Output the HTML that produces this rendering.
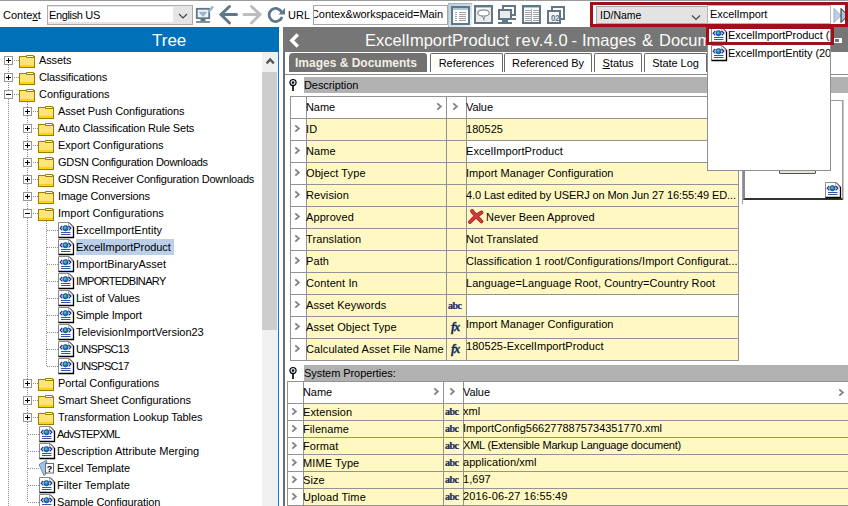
<!DOCTYPE html><html><head><meta charset="utf-8"><style>
*{box-sizing:border-box}
html,body{margin:0;padding:0}
body{width:848px;height:506px;overflow:hidden;position:relative;background:#fff;font-family:"Liberation Sans",sans-serif;font-size:11px;color:#000}
.a{position:absolute}
.t{position:absolute;white-space:nowrap;line-height:13px}
.tr{position:absolute;white-space:nowrap;line-height:13px;letter-spacing:-0.18px}
.tb{position:absolute;white-space:nowrap;line-height:13px;letter-spacing:-0.07px}
svg.i{position:absolute;overflow:visible}
.dv{position:absolute;width:1px;background-image:linear-gradient(#8c8c8c 50%,transparent 50%);background-size:1px 2px}
.dh{position:absolute;height:1px;background-image:linear-gradient(90deg,#8c8c8c 50%,transparent 50%);background-size:2px 1px}
.box{position:absolute;width:9px;height:9px;border:1px solid #979797;background:#fff}
.box:before{content:"";position:absolute;left:1px;top:3px;width:5px;height:1px;background:#000}
.box.p:after{content:"";position:absolute;left:3px;top:1px;width:1px;height:5px;background:#000}
</style></head><body>
<div class="a" style="left:0;top:0;width:848px;height:1px;background:#9a9a9a"></div>
<div class="t" style="left:3px;top:9px">Conte<u>x</u>t</div>
<div class="a" style="left:47px;top:5px;width:146px;height:20px;border:1px solid #adadad;background:#e5e5e5"></div>
<div class="a" style="left:48px;top:7px;width:125px;height:15px;background:#fff"></div>
<div class="t" style="left:49px;top:9px;letter-spacing:-0.35px">English US</div>
<svg class="i" style="left:178px;top:13px" width="10" height="7"><path d="M1 1l4 4l4-4" fill="none" stroke="#444" stroke-width="1.2"/></svg>
<svg class="i" style="left:195px;top:4px" width="20" height="20"><rect x="1.8" y="4.8" width="12.4" height="9.4" fill="#eef2f5" stroke="#5f7889" stroke-width="1.8"/><path d="M5 8.5l3 3.2l3-3.2z" fill="#9ab4c6" stroke="#9ab4c6" stroke-width="1.5" stroke-linejoin="round"/><rect x="5.5" y="14.5" width="5" height="2.5" fill="#5f7889"/><rect x="1" y="17.2" width="14" height="1.6" fill="#5f7889"/><path d="M13.5 8l4.5-5.5" stroke="#9ab8cc" stroke-width="2.6"/></svg>
<svg class="i" style="left:218px;top:4px" width="20" height="21"><path d="M11.5 2.5l-8.5 8l8.5 8.5M4 10.5h14.5" fill="none" stroke="#5f7889" stroke-width="3" stroke-linecap="round"/></svg>
<svg class="i" style="left:242px;top:4px" width="20" height="21"><path d="M9.5 2.5l8.5 8l-8.5 8.5M2 10.5h14.5" fill="none" stroke="#bdbdbd" stroke-width="3" stroke-linecap="round"/></svg>
<svg class="i" style="left:267px;top:5px" width="19" height="19"><path d="M14.6 7A6.6 6.6 0 1 0 14.6 13" fill="none" stroke="#5f7889" stroke-width="2.8" stroke-linecap="round"/><path d="M11.5 9.5h6.5v-6.5z" fill="#5f7889"/></svg>
<div class="t" style="left:288px;top:9px">URL</div>
<div class="a" style="left:313px;top:5px;width:135px;height:20px;border:1px solid #a5a5a5;background:#fff;overflow:hidden"><div class="tb" style="left:-3px;top:2px">Contex&amp;workspaceid=Main</div></div>
<div class="a" style="left:448px;top:3px;width:24px;height:24px;background:linear-gradient(135deg,#bcd0dc 0%,#d3e1e9 60%,#eef4f7 100%);border-top:1px solid #9fb4c2;border-left:1px solid #aec2cf"></div>
<svg class="i" style="left:451px;top:6px" width="19" height="19" shape-rendering="crispEdges"><rect x="0" y="0" width="19" height="19" fill="#5f7889"/><rect x="2" y="2" width="15" height="15" fill="#fff"/><rect x="2" y="2" width="15" height="2" fill="#a9c7d4"/><rect x="4" y="6" width="2" height="1" fill="#a3a3a3"/><rect x="8" y="6" width="7" height="1" fill="#a3a3a3"/><rect x="4" y="8" width="2" height="1" fill="#a3a3a3"/><rect x="8" y="8" width="7" height="1" fill="#a3a3a3"/><rect x="4" y="10" width="2" height="1" fill="#a3a3a3"/><rect x="8" y="10" width="7" height="1" fill="#a3a3a3"/><rect x="4" y="12" width="2" height="1" fill="#a3a3a3"/><rect x="8" y="12" width="7" height="1" fill="#a3a3a3"/><rect x="4" y="14" width="2" height="1" fill="#a3a3a3"/><rect x="8" y="14" width="7" height="1" fill="#a3a3a3"/></svg>
<svg class="i" style="left:474px;top:5px" width="19" height="19" shape-rendering="crispEdges"><rect x="0" y="0" width="19" height="19" fill="#5f7889"/><rect x="2" y="2" width="15" height="15" fill="#fff"/><rect x="2" y="2" width="15" height="1" fill="#a9c7d4"/><rect x="2" y="4" width="15" height="13" fill="#ececec"/></svg>
<svg class="i" style="left:474px;top:5px" width="19" height="19"><ellipse cx="9.5" cy="8" rx="5.8" ry="3.1" fill="#fff" stroke="#8c8c8c" stroke-width="1.2"/><path d="M8.3 10.8l1.6 3.8l0.6-3.6" fill="#fff" stroke="#8c8c8c" stroke-width="1.1"/></svg>
<svg class="i" style="left:497px;top:4px" width="20" height="21" shape-rendering="crispEdges"><rect x="5" y="1" width="14" height="11" fill="#5f7889"/><rect x="7" y="3" width="10" height="7" fill="#fff"/><rect x="14" y="14" width="5" height="2" fill="#5f7889"/><rect x="1" y="5" width="14" height="11" fill="#5f7889"/><rect x="3" y="7" width="10" height="7" fill="#ececec"/><rect x="5" y="16" width="6" height="2" fill="#5f7889"/><rect x="1" y="18" width="14" height="2" fill="#5f7889"/></svg>
<svg class="i" style="left:522px;top:5px" width="19" height="19" shape-rendering="crispEdges"><rect x="0" y="0" width="19" height="19" fill="#5f7889"/><rect x="2" y="2" width="15" height="15" fill="#fff"/><rect x="2" y="2" width="15" height="1" fill="#a9c7d4"/><rect x="3" y="5" width="6" height="1" fill="#a3a3a3"/><rect x="11" y="5" width="6" height="1" fill="#a3a3a3"/><rect x="3" y="7" width="6" height="1" fill="#a3a3a3"/><rect x="11" y="7" width="6" height="1" fill="#a3a3a3"/><rect x="3" y="9" width="6" height="1" fill="#a3a3a3"/><rect x="11" y="9" width="6" height="1" fill="#a3a3a3"/><rect x="3" y="11" width="6" height="1" fill="#a3a3a3"/><rect x="11" y="11" width="6" height="1" fill="#a3a3a3"/><rect x="3" y="13" width="6" height="1" fill="#a3a3a3"/><rect x="11" y="13" width="6" height="1" fill="#a3a3a3"/><rect x="3" y="15" width="6" height="1" fill="#a3a3a3"/><rect x="11" y="15" width="6" height="1" fill="#a3a3a3"/><rect x="9" y="4" width="1" height="13" fill="#b0b0b0"/><rect x="2" y="3" width="15" height="1" fill="#fff"/></svg>
<svg class="i" style="left:547px;top:6px" width="19" height="19" shape-rendering="crispEdges"><rect x="4" y="0" width="14" height="14" fill="#5f7889"/><rect x="6" y="2" width="10" height="10" fill="#fff"/><rect x="0" y="4" width="14" height="14" fill="#5f7889"/><rect x="2" y="6" width="10" height="10" fill="#f6f6f6"/></svg>
<div class="t" style="left:551px;top:13px;font-size:8px;line-height:9px;font-weight:bold;color:#5f7889;letter-spacing:-0.3px;transform:scaleY(1.15);transform-origin:0 0">02</div>
<div class="a" style="left:0;top:27px;width:279px;height:25px;background:#0070b9"></div>
<div class="t" style="left:152px;top:31px;font-size:17px;line-height:19px;color:#fff">Tree</div>
<div class="a" style="left:278px;top:52px;width:1px;height:454px;background:#1a78c2"></div>
<div class="a" style="left:262px;top:52px;width:16px;height:454px;background:#f0f0f0"></div>
<div class="a" style="left:262px;top:72px;width:15px;height:258px;background:#cdcdcd"></div>
<svg class="i" style="left:265px;top:57px" width="10" height="8"><path d="M1.6 6.4l3.6-3.9l3.6 3.9" fill="none" stroke="#555" stroke-width="2.3"/></svg>
<div class="dv" style="left:8px;top:65px;height:441px"></div>
<div class="dv" style="left:27px;top:98px;height:404px"></div>
<div class="dv" style="left:46px;top:219px;height:148px"></div>
<div class="box p" style="left:4px;top:56px"></div>
<div class="dh" style="left:14px;top:60px;width:5px"></div>
<svg class="i" style="left:19px;top:55px" width="16" height="13"><rect x="0.5" y="1.5" width="15" height="11" fill="#ffe47a" stroke="#9c7e00" stroke-width="1"/><path d="M7.5 0.5h7v2h-7z" fill="#fff" stroke="#9c7e00" stroke-width="1"/><rect x="1" y="10" width="14" height="2" fill="#ffd400"/></svg>
<div class="tr" style="left:39px;top:54px;letter-spacing:-0.120px">Assets</div>
<div class="box p" style="left:4px;top:73px"></div>
<div class="dh" style="left:14px;top:77px;width:5px"></div>
<svg class="i" style="left:19px;top:72px" width="16" height="13"><rect x="0.5" y="1.5" width="15" height="11" fill="#ffe47a" stroke="#9c7e00" stroke-width="1"/><path d="M7.5 0.5h7v2h-7z" fill="#fff" stroke="#9c7e00" stroke-width="1"/><rect x="1" y="10" width="14" height="2" fill="#ffd400"/></svg>
<div class="tr" style="left:39px;top:71px;letter-spacing:-0.151px">Classifications</div>
<div class="box m" style="left:4px;top:90px"></div>
<div class="dh" style="left:14px;top:94px;width:5px"></div>
<svg class="i" style="left:19px;top:89px" width="16" height="13"><rect x="0.5" y="1.5" width="15" height="11" fill="#ffe47a" stroke="#9c7e00" stroke-width="1"/><path d="M7.5 0.5h7v2h-7z" fill="#fff" stroke="#9c7e00" stroke-width="1"/><rect x="1" y="10" width="14" height="2" fill="#ffd400"/></svg>
<div class="tr" style="left:39px;top:88px;letter-spacing:-0.026px">Configurations</div>
<div class="box p" style="left:23px;top:107px"></div>
<div class="dh" style="left:33px;top:111px;width:5px"></div>
<svg class="i" style="left:38px;top:106px" width="16" height="13"><rect x="0.5" y="1.5" width="15" height="11" fill="#ffe47a" stroke="#9c7e00" stroke-width="1"/><path d="M7.5 0.5h7v2h-7z" fill="#fff" stroke="#9c7e00" stroke-width="1"/><rect x="1" y="10" width="14" height="2" fill="#ffd400"/></svg>
<div class="tr" style="left:58px;top:105px;letter-spacing:-0.134px">Asset Push Configurations</div>
<div class="box p" style="left:23px;top:124px"></div>
<div class="dh" style="left:33px;top:128px;width:5px"></div>
<svg class="i" style="left:38px;top:123px" width="16" height="13"><rect x="0.5" y="1.5" width="15" height="11" fill="#ffe47a" stroke="#9c7e00" stroke-width="1"/><path d="M7.5 0.5h7v2h-7z" fill="#fff" stroke="#9c7e00" stroke-width="1"/><rect x="1" y="10" width="14" height="2" fill="#ffd400"/></svg>
<div class="tr" style="left:58px;top:122px;letter-spacing:-0.176px">Auto Classification Rule Sets</div>
<div class="box p" style="left:23px;top:141px"></div>
<div class="dh" style="left:33px;top:145px;width:5px"></div>
<svg class="i" style="left:38px;top:140px" width="16" height="13"><rect x="0.5" y="1.5" width="15" height="11" fill="#ffe47a" stroke="#9c7e00" stroke-width="1"/><path d="M7.5 0.5h7v2h-7z" fill="#fff" stroke="#9c7e00" stroke-width="1"/><rect x="1" y="10" width="14" height="2" fill="#ffd400"/></svg>
<div class="tr" style="left:58px;top:139px;letter-spacing:-0.015px">Export Configurations</div>
<div class="box p" style="left:23px;top:158px"></div>
<div class="dh" style="left:33px;top:162px;width:5px"></div>
<svg class="i" style="left:38px;top:157px" width="16" height="13"><rect x="0.5" y="1.5" width="15" height="11" fill="#ffe47a" stroke="#9c7e00" stroke-width="1"/><path d="M7.5 0.5h7v2h-7z" fill="#fff" stroke="#9c7e00" stroke-width="1"/><rect x="1" y="10" width="14" height="2" fill="#ffd400"/></svg>
<div class="tr" style="left:58px;top:156px;letter-spacing:-0.284px">GDSN Configuration Downloads</div>
<div class="box p" style="left:23px;top:175px"></div>
<div class="dh" style="left:33px;top:179px;width:5px"></div>
<svg class="i" style="left:38px;top:174px" width="16" height="13"><rect x="0.5" y="1.5" width="15" height="11" fill="#ffe47a" stroke="#9c7e00" stroke-width="1"/><path d="M7.5 0.5h7v2h-7z" fill="#fff" stroke="#9c7e00" stroke-width="1"/><rect x="1" y="10" width="14" height="2" fill="#ffd400"/></svg>
<div class="tr" style="left:58px;top:173px;letter-spacing:-0.219px">GDSN Receiver Configuration Downloads</div>
<div class="box p" style="left:23px;top:192px"></div>
<div class="dh" style="left:33px;top:196px;width:5px"></div>
<svg class="i" style="left:38px;top:191px" width="16" height="13"><rect x="0.5" y="1.5" width="15" height="11" fill="#ffe47a" stroke="#9c7e00" stroke-width="1"/><path d="M7.5 0.5h7v2h-7z" fill="#fff" stroke="#9c7e00" stroke-width="1"/><rect x="1" y="10" width="14" height="2" fill="#ffd400"/></svg>
<div class="tr" style="left:58px;top:190px;letter-spacing:-0.180px">Image Conversions</div>
<div class="box m" style="left:23px;top:209px"></div>
<div class="dh" style="left:33px;top:213px;width:5px"></div>
<svg class="i" style="left:38px;top:208px" width="16" height="13"><rect x="0.5" y="1.5" width="15" height="11" fill="#ffe47a" stroke="#9c7e00" stroke-width="1"/><path d="M7.5 0.5h7v2h-7z" fill="#fff" stroke="#9c7e00" stroke-width="1"/><rect x="1" y="10" width="14" height="2" fill="#ffd400"/></svg>
<div class="tr" style="left:58px;top:207px;letter-spacing:0.035px">Import Configurations</div>
<div class="dh" style="left:47px;top:230px;width:11px"></div>
<svg class="i" style="left:58px;top:222px" width="16" height="16"><path d="M0.5 0.5h10.5l4.5 4.5v10.5h-15z" fill="#fff" stroke="#8a8a8a" stroke-width="1"/><path d="M15.5 5v10.5h-15" fill="none" stroke="#000" stroke-width="1.3"/><path d="M10.5 0.5v4.5h4.5" fill="#fff" stroke="#9a9a9a" stroke-width="0.8"/><path d="M11 0.5l4.5 4.5" stroke="#222" stroke-width="0.9"/><path d="M4.3 4l-2.1 2.2l2.1 2.2M10.7 4l2.1 2.2l-2.1 2.2" fill="none" stroke="#1a2a9a" stroke-width="1.2"/><circle cx="7.5" cy="6.2" r="2.7" fill="#1f6fc4" stroke="#0c3c8a" stroke-width="0.6"/><circle cx="7.1" cy="5.7" r="1.3" fill="#4cc47c"/><rect x="3" y="10" width="9.5" height="1" fill="#2f57a8"/><rect x="3" y="12" width="9.5" height="1" fill="#2f57a8"/></svg>
<div class="tr" style="left:76px;top:224px;letter-spacing:0.026px">ExcelImportEntity</div>
<div class="dh" style="left:47px;top:247px;width:11px"></div>
<svg class="i" style="left:58px;top:239px" width="16" height="16"><path d="M0.5 0.5h10.5l4.5 4.5v10.5h-15z" fill="#fff" stroke="#8a8a8a" stroke-width="1"/><path d="M15.5 5v10.5h-15" fill="none" stroke="#000" stroke-width="1.3"/><path d="M10.5 0.5v4.5h4.5" fill="#fff" stroke="#9a9a9a" stroke-width="0.8"/><path d="M11 0.5l4.5 4.5" stroke="#222" stroke-width="0.9"/><path d="M4.3 4l-2.1 2.2l2.1 2.2M10.7 4l2.1 2.2l-2.1 2.2" fill="none" stroke="#1a2a9a" stroke-width="1.2"/><circle cx="7.5" cy="6.2" r="2.7" fill="#1f6fc4" stroke="#0c3c8a" stroke-width="0.6"/><circle cx="7.1" cy="5.7" r="1.3" fill="#4cc47c"/><rect x="3" y="10" width="9.5" height="1" fill="#2f57a8"/><rect x="3" y="12" width="9.5" height="1" fill="#2f57a8"/></svg>
<div class="a" style="left:76px;top:239px;width:98px;height:16px;background:#bccfe9"></div>
<div class="tr" style="left:76px;top:241px;letter-spacing:-0.068px">ExcelImportProduct</div>
<div class="dh" style="left:47px;top:264px;width:11px"></div>
<svg class="i" style="left:58px;top:256px" width="16" height="16"><path d="M0.5 0.5h10.5l4.5 4.5v10.5h-15z" fill="#fff" stroke="#8a8a8a" stroke-width="1"/><path d="M15.5 5v10.5h-15" fill="none" stroke="#000" stroke-width="1.3"/><path d="M10.5 0.5v4.5h4.5" fill="#fff" stroke="#9a9a9a" stroke-width="0.8"/><path d="M11 0.5l4.5 4.5" stroke="#222" stroke-width="0.9"/><path d="M4.3 4l-2.1 2.2l2.1 2.2M10.7 4l2.1 2.2l-2.1 2.2" fill="none" stroke="#1a2a9a" stroke-width="1.2"/><circle cx="7.5" cy="6.2" r="2.7" fill="#1f6fc4" stroke="#0c3c8a" stroke-width="0.6"/><circle cx="7.1" cy="5.7" r="1.3" fill="#4cc47c"/><rect x="3" y="10" width="9.5" height="1" fill="#2f57a8"/><rect x="3" y="12" width="9.5" height="1" fill="#2f57a8"/></svg>
<div class="tr" style="left:76px;top:258px;letter-spacing:0.008px">ImportBinaryAsset</div>
<div class="dh" style="left:47px;top:281px;width:11px"></div>
<svg class="i" style="left:58px;top:273px" width="16" height="16"><path d="M0.5 0.5h10.5l4.5 4.5v10.5h-15z" fill="#fff" stroke="#8a8a8a" stroke-width="1"/><path d="M15.5 5v10.5h-15" fill="none" stroke="#000" stroke-width="1.3"/><path d="M10.5 0.5v4.5h4.5" fill="#fff" stroke="#9a9a9a" stroke-width="0.8"/><path d="M11 0.5l4.5 4.5" stroke="#222" stroke-width="0.9"/><path d="M4.3 4l-2.1 2.2l2.1 2.2M10.7 4l2.1 2.2l-2.1 2.2" fill="none" stroke="#1a2a9a" stroke-width="1.2"/><circle cx="7.5" cy="6.2" r="2.7" fill="#1f6fc4" stroke="#0c3c8a" stroke-width="0.6"/><circle cx="7.1" cy="5.7" r="1.3" fill="#4cc47c"/><rect x="3" y="10" width="9.5" height="1" fill="#2f57a8"/><rect x="3" y="12" width="9.5" height="1" fill="#2f57a8"/></svg>
<div class="tr" style="left:76px;top:275px;letter-spacing:-0.642px">IMPORTEDBINARY</div>
<div class="dh" style="left:47px;top:298px;width:11px"></div>
<svg class="i" style="left:58px;top:290px" width="16" height="16"><path d="M0.5 0.5h10.5l4.5 4.5v10.5h-15z" fill="#fff" stroke="#8a8a8a" stroke-width="1"/><path d="M15.5 5v10.5h-15" fill="none" stroke="#000" stroke-width="1.3"/><path d="M10.5 0.5v4.5h4.5" fill="#fff" stroke="#9a9a9a" stroke-width="0.8"/><path d="M11 0.5l4.5 4.5" stroke="#222" stroke-width="0.9"/><path d="M4.3 4l-2.1 2.2l2.1 2.2M10.7 4l2.1 2.2l-2.1 2.2" fill="none" stroke="#1a2a9a" stroke-width="1.2"/><circle cx="7.5" cy="6.2" r="2.7" fill="#1f6fc4" stroke="#0c3c8a" stroke-width="0.6"/><circle cx="7.1" cy="5.7" r="1.3" fill="#4cc47c"/><rect x="3" y="10" width="9.5" height="1" fill="#2f57a8"/><rect x="3" y="12" width="9.5" height="1" fill="#2f57a8"/></svg>
<div class="tr" style="left:76px;top:292px;letter-spacing:-0.088px">List of Values</div>
<div class="dh" style="left:47px;top:315px;width:11px"></div>
<svg class="i" style="left:58px;top:307px" width="16" height="16"><path d="M0.5 0.5h10.5l4.5 4.5v10.5h-15z" fill="#fff" stroke="#8a8a8a" stroke-width="1"/><path d="M15.5 5v10.5h-15" fill="none" stroke="#000" stroke-width="1.3"/><path d="M10.5 0.5v4.5h4.5" fill="#fff" stroke="#9a9a9a" stroke-width="0.8"/><path d="M11 0.5l4.5 4.5" stroke="#222" stroke-width="0.9"/><path d="M4.3 4l-2.1 2.2l2.1 2.2M10.7 4l2.1 2.2l-2.1 2.2" fill="none" stroke="#1a2a9a" stroke-width="1.2"/><circle cx="7.5" cy="6.2" r="2.7" fill="#1f6fc4" stroke="#0c3c8a" stroke-width="0.6"/><circle cx="7.1" cy="5.7" r="1.3" fill="#4cc47c"/><rect x="3" y="10" width="9.5" height="1" fill="#2f57a8"/><rect x="3" y="12" width="9.5" height="1" fill="#2f57a8"/></svg>
<div class="tr" style="left:76px;top:309px;letter-spacing:-0.147px">Simple Import</div>
<div class="dh" style="left:47px;top:332px;width:11px"></div>
<svg class="i" style="left:58px;top:324px" width="16" height="16"><path d="M0.5 0.5h10.5l4.5 4.5v10.5h-15z" fill="#fff" stroke="#8a8a8a" stroke-width="1"/><path d="M15.5 5v10.5h-15" fill="none" stroke="#000" stroke-width="1.3"/><path d="M10.5 0.5v4.5h4.5" fill="#fff" stroke="#9a9a9a" stroke-width="0.8"/><path d="M11 0.5l4.5 4.5" stroke="#222" stroke-width="0.9"/><path d="M4.3 4l-2.1 2.2l2.1 2.2M10.7 4l2.1 2.2l-2.1 2.2" fill="none" stroke="#1a2a9a" stroke-width="1.2"/><circle cx="7.5" cy="6.2" r="2.7" fill="#1f6fc4" stroke="#0c3c8a" stroke-width="0.6"/><circle cx="7.1" cy="5.7" r="1.3" fill="#4cc47c"/><rect x="3" y="10" width="9.5" height="1" fill="#2f57a8"/><rect x="3" y="12" width="9.5" height="1" fill="#2f57a8"/></svg>
<div class="tr" style="left:76px;top:326px;letter-spacing:-0.030px">TelevisionImportVersion23</div>
<div class="dh" style="left:47px;top:349px;width:11px"></div>
<svg class="i" style="left:58px;top:341px" width="16" height="16"><path d="M0.5 0.5h10.5l4.5 4.5v10.5h-15z" fill="#fff" stroke="#8a8a8a" stroke-width="1"/><path d="M15.5 5v10.5h-15" fill="none" stroke="#000" stroke-width="1.3"/><path d="M10.5 0.5v4.5h4.5" fill="#fff" stroke="#9a9a9a" stroke-width="0.8"/><path d="M11 0.5l4.5 4.5" stroke="#222" stroke-width="0.9"/><path d="M4.3 4l-2.1 2.2l2.1 2.2M10.7 4l2.1 2.2l-2.1 2.2" fill="none" stroke="#1a2a9a" stroke-width="1.2"/><circle cx="7.5" cy="6.2" r="2.7" fill="#1f6fc4" stroke="#0c3c8a" stroke-width="0.6"/><circle cx="7.1" cy="5.7" r="1.3" fill="#4cc47c"/><rect x="3" y="10" width="9.5" height="1" fill="#2f57a8"/><rect x="3" y="12" width="9.5" height="1" fill="#2f57a8"/></svg>
<div class="tr" style="left:76px;top:343px;letter-spacing:-0.666px">UNSPSC13</div>
<div class="dh" style="left:47px;top:366px;width:11px"></div>
<svg class="i" style="left:58px;top:358px" width="16" height="16"><path d="M0.5 0.5h10.5l4.5 4.5v10.5h-15z" fill="#fff" stroke="#8a8a8a" stroke-width="1"/><path d="M15.5 5v10.5h-15" fill="none" stroke="#000" stroke-width="1.3"/><path d="M10.5 0.5v4.5h4.5" fill="#fff" stroke="#9a9a9a" stroke-width="0.8"/><path d="M11 0.5l4.5 4.5" stroke="#222" stroke-width="0.9"/><path d="M4.3 4l-2.1 2.2l2.1 2.2M10.7 4l2.1 2.2l-2.1 2.2" fill="none" stroke="#1a2a9a" stroke-width="1.2"/><circle cx="7.5" cy="6.2" r="2.7" fill="#1f6fc4" stroke="#0c3c8a" stroke-width="0.6"/><circle cx="7.1" cy="5.7" r="1.3" fill="#4cc47c"/><rect x="3" y="10" width="9.5" height="1" fill="#2f57a8"/><rect x="3" y="12" width="9.5" height="1" fill="#2f57a8"/></svg>
<div class="tr" style="left:76px;top:360px;letter-spacing:-0.666px">UNSPSC17</div>
<div class="box p" style="left:23px;top:379px"></div>
<div class="dh" style="left:33px;top:383px;width:5px"></div>
<svg class="i" style="left:38px;top:378px" width="16" height="13"><rect x="0.5" y="1.5" width="15" height="11" fill="#ffe47a" stroke="#9c7e00" stroke-width="1"/><path d="M7.5 0.5h7v2h-7z" fill="#fff" stroke="#9c7e00" stroke-width="1"/><rect x="1" y="10" width="14" height="2" fill="#ffd400"/></svg>
<div class="tr" style="left:58px;top:377px;letter-spacing:-0.070px">Portal Configurations</div>
<div class="box p" style="left:23px;top:396px"></div>
<div class="dh" style="left:33px;top:400px;width:5px"></div>
<svg class="i" style="left:38px;top:395px" width="16" height="13"><rect x="0.5" y="1.5" width="15" height="11" fill="#ffe47a" stroke="#9c7e00" stroke-width="1"/><path d="M7.5 0.5h7v2h-7z" fill="#fff" stroke="#9c7e00" stroke-width="1"/><rect x="1" y="10" width="14" height="2" fill="#ffd400"/></svg>
<div class="tr" style="left:58px;top:394px;letter-spacing:-0.088px">Smart Sheet Configurations</div>
<div class="box p" style="left:23px;top:413px"></div>
<div class="dh" style="left:33px;top:417px;width:5px"></div>
<svg class="i" style="left:38px;top:412px" width="16" height="13"><rect x="0.5" y="1.5" width="15" height="11" fill="#ffe47a" stroke="#9c7e00" stroke-width="1"/><path d="M7.5 0.5h7v2h-7z" fill="#fff" stroke="#9c7e00" stroke-width="1"/><rect x="1" y="10" width="14" height="2" fill="#ffd400"/></svg>
<div class="tr" style="left:58px;top:411px;letter-spacing:-0.110px">Transformation Lookup Tables</div>
<div class="dh" style="left:28px;top:434px;width:11px"></div>
<svg class="i" style="left:39px;top:426px" width="16" height="16"><path d="M0.5 0.5h10.5l4.5 4.5v10.5h-15z" fill="#fff" stroke="#8a8a8a" stroke-width="1"/><path d="M15.5 5v10.5h-15" fill="none" stroke="#000" stroke-width="1.3"/><path d="M10.5 0.5v4.5h4.5" fill="#fff" stroke="#9a9a9a" stroke-width="0.8"/><path d="M11 0.5l4.5 4.5" stroke="#222" stroke-width="0.9"/><path d="M4.3 4l-2.1 2.2l2.1 2.2M10.7 4l2.1 2.2l-2.1 2.2" fill="none" stroke="#1a2a9a" stroke-width="1.2"/><circle cx="7.5" cy="6.2" r="2.7" fill="#1f6fc4" stroke="#0c3c8a" stroke-width="0.6"/><circle cx="7.1" cy="5.7" r="1.3" fill="#4cc47c"/><rect x="3" y="10" width="9.5" height="1" fill="#2f57a8"/><rect x="3" y="12" width="9.5" height="1" fill="#2f57a8"/></svg>
<div class="tr" style="left:57px;top:428px;letter-spacing:-0.780px">AdvSTEPXML</div>
<div class="dh" style="left:28px;top:451px;width:11px"></div>
<svg class="i" style="left:39px;top:443px" width="16" height="16"><path d="M0.5 0.5h10.5l4.5 4.5v10.5h-15z" fill="#fff" stroke="#8a8a8a" stroke-width="1"/><path d="M15.5 5v10.5h-15" fill="none" stroke="#000" stroke-width="1.3"/><path d="M10.5 0.5v4.5h4.5" fill="#fff" stroke="#9a9a9a" stroke-width="0.8"/><path d="M11 0.5l4.5 4.5" stroke="#222" stroke-width="0.9"/><path d="M4.3 4l-2.1 2.2l2.1 2.2M10.7 4l2.1 2.2l-2.1 2.2" fill="none" stroke="#1a2a9a" stroke-width="1.2"/><circle cx="7.5" cy="6.2" r="2.7" fill="#1f6fc4" stroke="#0c3c8a" stroke-width="0.6"/><circle cx="7.1" cy="5.7" r="1.3" fill="#4cc47c"/><rect x="3" y="10" width="9.5" height="1" fill="#2f57a8"/><rect x="3" y="12" width="9.5" height="1" fill="#2f57a8"/></svg>
<div class="tr" style="left:57px;top:445px;letter-spacing:0.034px">Description Attribute Merging</div>
<div class="dh" style="left:28px;top:468px;width:11px"></div>
<svg class="i" style="left:39px;top:460px" width="16" height="16"><path d="M0 4.5l7.5-4.2l1.5 12l-4 3.2z" fill="#9cc6f2" stroke="#6f7f90" stroke-width="0.9"/><rect x="6.5" y="3.5" width="8" height="9.5" fill="#fff" stroke="#6a6a6a"/><text x="10.6" y="11.6" font-size="9" font-weight="bold" text-anchor="middle" font-family="Liberation Sans" fill="#000">?</text></svg>
<div class="tr" style="left:57px;top:462px;letter-spacing:-0.103px">Excel Template</div>
<div class="dh" style="left:28px;top:485px;width:11px"></div>
<svg class="i" style="left:39px;top:477px" width="16" height="16"><path d="M0.5 0.5h10.5l4.5 4.5v10.5h-15z" fill="#fff" stroke="#8a8a8a" stroke-width="1"/><path d="M15.5 5v10.5h-15" fill="none" stroke="#000" stroke-width="1.3"/><path d="M10.5 0.5v4.5h4.5" fill="#fff" stroke="#9a9a9a" stroke-width="0.8"/><path d="M11 0.5l4.5 4.5" stroke="#222" stroke-width="0.9"/><path d="M4.3 4l-2.1 2.2l2.1 2.2M10.7 4l2.1 2.2l-2.1 2.2" fill="none" stroke="#1a2a9a" stroke-width="1.2"/><circle cx="7.5" cy="6.2" r="2.7" fill="#1f6fc4" stroke="#0c3c8a" stroke-width="0.6"/><circle cx="7.1" cy="5.7" r="1.3" fill="#4cc47c"/><rect x="3" y="10" width="9.5" height="1" fill="#2f57a8"/><rect x="3" y="12" width="9.5" height="1" fill="#2f57a8"/></svg>
<div class="tr" style="left:57px;top:479px;letter-spacing:0.070px">Filter Template</div>
<div class="dh" style="left:28px;top:502px;width:11px"></div>
<svg class="i" style="left:39px;top:494px" width="16" height="16"><path d="M0.5 0.5h10.5l4.5 4.5v10.5h-15z" fill="#fff" stroke="#8a8a8a" stroke-width="1"/><path d="M15.5 5v10.5h-15" fill="none" stroke="#000" stroke-width="1.3"/><path d="M10.5 0.5v4.5h4.5" fill="#fff" stroke="#9a9a9a" stroke-width="0.8"/><path d="M11 0.5l4.5 4.5" stroke="#222" stroke-width="0.9"/><path d="M4.3 4l-2.1 2.2l2.1 2.2M10.7 4l2.1 2.2l-2.1 2.2" fill="none" stroke="#1a2a9a" stroke-width="1.2"/><circle cx="7.5" cy="6.2" r="2.7" fill="#1f6fc4" stroke="#0c3c8a" stroke-width="0.6"/><circle cx="7.1" cy="5.7" r="1.3" fill="#4cc47c"/><rect x="3" y="10" width="9.5" height="1" fill="#2f57a8"/><rect x="3" y="12" width="9.5" height="1" fill="#2f57a8"/></svg>
<div class="tr" style="left:57px;top:496px;letter-spacing:-0.127px">Sample Configuration</div>
<div class="a" style="left:283px;top:27px;width:565px;height:25px;background:#767676"></div>
<div class="a" style="left:283px;top:52px;width:2px;height:454px;background:#6d6d6d"></div>
<svg class="i" style="left:288px;top:33px" width="13" height="15"><path d="M9.8 1.5l-6 6l6 6" fill="none" stroke="#fff" stroke-width="3.4"/></svg>
<div class="t" style="left:365px;top:31px;font-size:16.5px;line-height:19px;color:#fbfbf6;">ExcelImportProduct</div>
<div class="t" style="left:515.5px;top:31px;font-size:16.5px;line-height:19px;color:#fbfbf6;letter-spacing:0.5px">rev.4.0</div>
<div class="t" style="left:571.5px;top:31px;font-size:16.5px;line-height:19px;color:#fbfbf6;">-</div>
<div class="t" style="left:582px;top:31px;font-size:16.5px;line-height:19px;color:#fbfbf6;">Images</div>
<div class="t" style="left:642px;top:31px;font-size:16.5px;line-height:19px;color:#fbfbf6;">&amp;</div>
<div class="t" style="left:659px;top:31px;font-size:16.5px;line-height:19px;color:#fbfbf6;">Documents</div>
<div class="a" style="left:285px;top:52px;width:563px;height:22px;background:#fff"></div>
<div class="a" style="left:285px;top:74px;width:563px;height:1px;background:#8c8c8c"></div>
<div class="a" style="left:289px;top:53px;width:138px;height:19px;background:#727272;border-radius:4px 3px 0 0"></div>
<div class="t" style="left:295px;top:56px;font-size:12px;line-height:14px;font-weight:bold;color:#f2efe2">Images &amp; Documents</div>
<div class="a" style="left:430px;top:53px;width:73px;height:19px;border:1px solid #6a6a6a;border-bottom:none;border-radius:2px 2px 0 0;background:#fff"></div>
<div class="tb" style="left:430px;top:57px;width:73px;text-align:center">References</div>
<div class="a" style="left:504px;top:53px;width:88px;height:19px;border:1px solid #6a6a6a;border-bottom:none;border-radius:2px 2px 0 0;background:#fff"></div>
<div class="tb" style="left:504px;top:57px;width:88px;text-align:center">Referenced By</div>
<div class="a" style="left:594px;top:53px;width:48px;height:19px;border:1px solid #6a6a6a;border-bottom:none;border-radius:2px 2px 0 0;background:#fff"></div>
<div class="tb" style="left:594px;top:57px;width:48px;text-align:center"><u>S</u>tatus</div>
<div class="a" style="left:644px;top:53px;width:63px;height:19px;border:1px solid #6a6a6a;border-bottom:none;border-radius:2px 2px 0 0;background:#fff"></div>
<div class="tb" style="left:644px;top:57px;width:63px;text-align:center">State Log</div>
<div class="a" style="left:709px;top:53px;width:52px;height:19px;border:1px solid #6a6a6a;border-bottom:none;border-radius:2px 2px 0 0;background:#fff"></div>
<div class="tb" style="left:709px;top:57px;width:52px;text-align:center"></div>
<svg class="i" style="left:289px;top:79px" width="9" height="13"><circle cx="4" cy="3.6" r="3.1" fill="#c8d8ea" stroke="#000" stroke-width="1.2"/><rect x="3" y="2.6" width="2" height="2" fill="#000"/><rect x="3.2" y="7" width="1.6" height="5" fill="#000"/></svg>
<div class="a" style="left:304px;top:77px;width:544px;height:16px;background:#b1b1b1"></div>
<div class="tb" style="left:304px;top:79px">Description</div>
<div class="a" style="left:290px;top:96px;width:448px;height:264px;background:#fff"></div>
<div class="a" style="left:306px;top:118px;width:160px;height:22px;background:#fff8c2"></div>
<div class="a" style="left:466px;top:118px;width:272px;height:22px;background:#fff8c2"></div>
<div class="a" style="left:306px;top:140px;width:160px;height:22px;background:#fff8c2"></div>
<div class="a" style="left:466px;top:140px;width:272px;height:22px;background:#fff"></div>
<div class="a" style="left:306px;top:162px;width:160px;height:22px;background:#fff8c2"></div>
<div class="a" style="left:466px;top:162px;width:272px;height:22px;background:#fff8c2"></div>
<div class="a" style="left:306px;top:184px;width:160px;height:22px;background:#fff8c2"></div>
<div class="a" style="left:466px;top:184px;width:272px;height:22px;background:#fff8c2"></div>
<div class="a" style="left:306px;top:206px;width:160px;height:22px;background:#fff8c2"></div>
<div class="a" style="left:466px;top:206px;width:272px;height:22px;background:#fff8c2"></div>
<div class="a" style="left:306px;top:228px;width:160px;height:22px;background:#fff8c2"></div>
<div class="a" style="left:466px;top:228px;width:272px;height:22px;background:#fff8c2"></div>
<div class="a" style="left:306px;top:250px;width:160px;height:22px;background:#fff8c2"></div>
<div class="a" style="left:466px;top:250px;width:272px;height:22px;background:#fff8c2"></div>
<div class="a" style="left:306px;top:272px;width:160px;height:22px;background:#fff8c2"></div>
<div class="a" style="left:466px;top:272px;width:272px;height:22px;background:#fff8c2"></div>
<div class="a" style="left:306px;top:294px;width:160px;height:22px;background:#fff8c2"></div>
<div class="a" style="left:466px;top:294px;width:272px;height:22px;background:#fff"></div>
<div class="a" style="left:306px;top:316px;width:160px;height:22px;background:#fff8c2"></div>
<div class="a" style="left:466px;top:316px;width:272px;height:22px;background:#fff8c2"></div>
<div class="a" style="left:306px;top:338px;width:160px;height:22px;background:#fff8c2"></div>
<div class="a" style="left:466px;top:338px;width:272px;height:22px;background:#fff8c2"></div>
<div class="a" style="left:290px;top:96px;width:449px;height:1px;background:#939393"></div>
<div class="a" style="left:290px;top:118px;width:449px;height:1px;background:#939393"></div>
<div class="a" style="left:290px;top:140px;width:449px;height:1px;background:#939393"></div>
<div class="a" style="left:290px;top:162px;width:449px;height:1px;background:#939393"></div>
<div class="a" style="left:290px;top:184px;width:449px;height:1px;background:#939393"></div>
<div class="a" style="left:290px;top:206px;width:449px;height:1px;background:#939393"></div>
<div class="a" style="left:290px;top:228px;width:449px;height:1px;background:#939393"></div>
<div class="a" style="left:290px;top:250px;width:449px;height:1px;background:#939393"></div>
<div class="a" style="left:290px;top:272px;width:449px;height:1px;background:#939393"></div>
<div class="a" style="left:290px;top:294px;width:449px;height:1px;background:#939393"></div>
<div class="a" style="left:290px;top:316px;width:449px;height:1px;background:#939393"></div>
<div class="a" style="left:290px;top:338px;width:449px;height:1px;background:#939393"></div>
<div class="a" style="left:290px;top:360px;width:449px;height:1px;background:#939393"></div>
<div class="a" style="left:290px;top:96px;width:1px;height:265px;background:#939393"></div>
<div class="a" style="left:306px;top:96px;width:1px;height:265px;background:#939393"></div>
<div class="a" style="left:446px;top:96px;width:1px;height:265px;background:#939393"></div>
<div class="a" style="left:466px;top:96px;width:1px;height:265px;background:#939393"></div>
<div class="a" style="left:738px;top:96px;width:1px;height:265px;background:#939393"></div>
<div class="tb" style="left:306px;top:101px">Name</div>
<svg class="i" style="left:436px;top:102px" width="7" height="9"><path d="M1.3 1.4l3.5 3.1l-3.5 3.1" fill="none" stroke="#858585" stroke-width="1.9"/></svg>
<svg class="i" style="left:452px;top:102px" width="7" height="9"><path d="M1.3 1.4l3.5 3.1l-3.5 3.1" fill="none" stroke="#858585" stroke-width="1.9"/></svg>
<div class="tb" style="left:466px;top:101px">Value</div>
<svg class="i" style="left:294px;top:124px" width="7" height="9"><path d="M1.3 1.4l3.5 3.1l-3.5 3.1" fill="none" stroke="#858585" stroke-width="1.9"/></svg>
<div class="tb" style="left:306px;top:123px;letter-spacing:0.1px">ID</div>
<div class="tb" style="left:466px;top:123px;letter-spacing:0.050px">180525</div>
<svg class="i" style="left:294px;top:146px" width="7" height="9"><path d="M1.3 1.4l3.5 3.1l-3.5 3.1" fill="none" stroke="#858585" stroke-width="1.9"/></svg>
<div class="tb" style="left:306px;top:145px;letter-spacing:0.1px">Name</div>
<div class="tb" style="left:466px;top:145px;letter-spacing:0.050px">ExcelImportProduct</div>
<svg class="i" style="left:294px;top:168px" width="7" height="9"><path d="M1.3 1.4l3.5 3.1l-3.5 3.1" fill="none" stroke="#858585" stroke-width="1.9"/></svg>
<div class="tb" style="left:306px;top:167px;letter-spacing:0.1px">Object Type</div>
<div class="tb" style="left:466px;top:167px;letter-spacing:0.050px">Import Manager Configuration</div>
<svg class="i" style="left:294px;top:190px" width="7" height="9"><path d="M1.3 1.4l3.5 3.1l-3.5 3.1" fill="none" stroke="#858585" stroke-width="1.9"/></svg>
<div class="tb" style="left:306px;top:189px;letter-spacing:0.1px">Revision</div>
<div class="tb" style="left:466px;top:189px;letter-spacing:-0.100px">4.0 Last edited by USERJ on Mon Jun 27 16:55:49 ED...</div>
<svg class="i" style="left:294px;top:212px" width="7" height="9"><path d="M1.3 1.4l3.5 3.1l-3.5 3.1" fill="none" stroke="#858585" stroke-width="1.9"/></svg>
<div class="tb" style="left:306px;top:211px;letter-spacing:0.1px">Approved</div>
<div class="tb" style="left:466px;top:211px;letter-spacing:0.050px"><span style="padding-left:20px">Never Been Approved</span></div>
<svg class="i" style="left:294px;top:234px" width="7" height="9"><path d="M1.3 1.4l3.5 3.1l-3.5 3.1" fill="none" stroke="#858585" stroke-width="1.9"/></svg>
<div class="tb" style="left:306px;top:233px;letter-spacing:0.1px">Translation</div>
<div class="tb" style="left:466px;top:233px;letter-spacing:0.050px">Not Translated</div>
<svg class="i" style="left:294px;top:256px" width="7" height="9"><path d="M1.3 1.4l3.5 3.1l-3.5 3.1" fill="none" stroke="#858585" stroke-width="1.9"/></svg>
<div class="tb" style="left:306px;top:255px;letter-spacing:0.1px">Path</div>
<div class="tb" style="left:466px;top:255px;letter-spacing:0.080px">Classification 1 root/Configurations/Import Configurat...</div>
<svg class="i" style="left:294px;top:278px" width="7" height="9"><path d="M1.3 1.4l3.5 3.1l-3.5 3.1" fill="none" stroke="#858585" stroke-width="1.9"/></svg>
<div class="tb" style="left:306px;top:277px;letter-spacing:0.1px">Content In</div>
<div class="tb" style="left:466px;top:277px;letter-spacing:0.060px">Language=Language Root, Country=Country Root</div>
<svg class="i" style="left:294px;top:300px" width="7" height="9"><path d="M1.3 1.4l3.5 3.1l-3.5 3.1" fill="none" stroke="#858585" stroke-width="1.9"/></svg>
<div class="tb" style="left:306px;top:299px;letter-spacing:0.1px">Asset Keywords</div>
<div class="t" style="left:448px;top:299px;font-family:'Liberation Serif',serif;font-weight:bold;font-size:10px;color:#15295c;letter-spacing:-0.5px;-webkit-text-stroke:0.2px #15295c">abc</div>
<div class="tb" style="left:466px;top:299px;letter-spacing:0.050px"></div>
<svg class="i" style="left:294px;top:322px" width="7" height="9"><path d="M1.3 1.4l3.5 3.1l-3.5 3.1" fill="none" stroke="#858585" stroke-width="1.9"/></svg>
<div class="tb" style="left:306px;top:321px;letter-spacing:0.1px">Asset Object Type</div>
<div class="t" style="left:451px;top:321px;font-family:'Liberation Serif',serif;font-weight:bold;font-style:italic;font-size:12.5px;color:#15295c;letter-spacing:-1.2px;-webkit-text-stroke:0.3px #15295c">fx</div>
<div class="tb" style="left:466px;top:318px;letter-spacing:0.050px">Import Manager Configuration</div>
<svg class="i" style="left:294px;top:344px" width="7" height="9"><path d="M1.3 1.4l3.5 3.1l-3.5 3.1" fill="none" stroke="#858585" stroke-width="1.9"/></svg>
<div class="tb" style="left:306px;top:343px;letter-spacing:0.1px">Calculated Asset File Name</div>
<div class="t" style="left:451px;top:343px;font-family:'Liberation Serif',serif;font-weight:bold;font-style:italic;font-size:12.5px;color:#15295c;letter-spacing:-1.2px;-webkit-text-stroke:0.3px #15295c">fx</div>
<div class="tb" style="left:466px;top:340px;letter-spacing:0.050px">180525-ExcelImportProduct</div>
<svg class="i" style="left:468px;top:209px" width="16" height="16"><path d="M4 2Q7 6 13.5 12.5M13.5 3.5Q8 6.5 2 13" fill="none" stroke="#8e2227" stroke-width="3.8" stroke-linecap="round"/><path d="M4 2Q7 6 13.5 12.5M13.5 3.5Q8 6.5 2 13" fill="none" stroke="#d2393d" stroke-width="2.6" stroke-linecap="round"/></svg>
<div class="a" style="left:742px;top:100px;width:1px;height:104px;background:#a0a0a0"></div>
<div class="a" style="left:743px;top:100px;width:100px;height:100px;border:2px solid #8a8a8a;border-top:1px solid #9a9a9a;border-right:1px solid #9a9a9a;border-bottom:2px solid #333;background:#fff;box-shadow:1px 0 0 #c8c8c8"></div>
<div class="a" style="left:779px;top:166px;width:37px;height:8px;background:#e6e4d8;border:1px solid #555;border-radius:1px"></div>
<svg class="i" style="left:825px;top:182px" width="16" height="16"><path d="M0.5 0.5h10.5l4.5 4.5v10.5h-15z" fill="#fff" stroke="#8a8a8a" stroke-width="1"/><path d="M15.5 5v10.5h-15" fill="none" stroke="#000" stroke-width="1.3"/><path d="M10.5 0.5v4.5h4.5" fill="#fff" stroke="#9a9a9a" stroke-width="0.8"/><path d="M11 0.5l4.5 4.5" stroke="#222" stroke-width="0.9"/><path d="M4.3 4l-2.1 2.2l2.1 2.2M10.7 4l2.1 2.2l-2.1 2.2" fill="none" stroke="#1a2a9a" stroke-width="1.2"/><circle cx="7.5" cy="6.2" r="2.7" fill="#1f6fc4" stroke="#0c3c8a" stroke-width="0.6"/><circle cx="7.1" cy="5.7" r="1.3" fill="#4cc47c"/><rect x="3" y="10" width="9.5" height="1" fill="#2f57a8"/><rect x="3" y="12" width="9.5" height="1" fill="#2f57a8"/></svg>
<svg class="i" style="left:289px;top:367px" width="9" height="13"><circle cx="4" cy="3.6" r="3.1" fill="#c8d8ea" stroke="#000" stroke-width="1.2"/><rect x="3" y="2.6" width="2" height="2" fill="#000"/><rect x="3.2" y="7" width="1.6" height="5" fill="#000"/></svg>
<div class="a" style="left:304px;top:365px;width:544px;height:16px;background:#b1b1b1"></div>
<div class="tb" style="left:304px;top:367px">System Properties:</div>
<div class="a" style="left:287px;top:381px;width:561px;height:124px;background:#fff"></div>
<div class="a" style="left:303px;top:403px;width:160px;height:17px;background:#fff8c2"></div>
<div class="a" style="left:463px;top:403px;width:385px;height:17px;background:#fff8c2"></div>
<div class="a" style="left:303px;top:420px;width:160px;height:17px;background:#fff8c2"></div>
<div class="a" style="left:463px;top:420px;width:385px;height:17px;background:#fff8c2"></div>
<div class="a" style="left:303px;top:437px;width:160px;height:17px;background:#fff8c2"></div>
<div class="a" style="left:463px;top:437px;width:385px;height:17px;background:#fff8c2"></div>
<div class="a" style="left:303px;top:454px;width:160px;height:17px;background:#fff8c2"></div>
<div class="a" style="left:463px;top:454px;width:385px;height:17px;background:#fff8c2"></div>
<div class="a" style="left:303px;top:471px;width:160px;height:17px;background:#fff8c2"></div>
<div class="a" style="left:463px;top:471px;width:385px;height:17px;background:#fff8c2"></div>
<div class="a" style="left:303px;top:488px;width:160px;height:17px;background:#fff8c2"></div>
<div class="a" style="left:463px;top:488px;width:385px;height:17px;background:#fff8c2"></div>
<div class="a" style="left:287px;top:381px;width:562px;height:1px;background:#939393"></div>
<div class="a" style="left:287px;top:403px;width:562px;height:1px;background:#939393"></div>
<div class="a" style="left:287px;top:420px;width:562px;height:1px;background:#939393"></div>
<div class="a" style="left:287px;top:437px;width:562px;height:1px;background:#939393"></div>
<div class="a" style="left:287px;top:454px;width:562px;height:1px;background:#939393"></div>
<div class="a" style="left:287px;top:471px;width:562px;height:1px;background:#939393"></div>
<div class="a" style="left:287px;top:488px;width:562px;height:1px;background:#939393"></div>
<div class="a" style="left:287px;top:505px;width:562px;height:1px;background:#939393"></div>
<div class="a" style="left:287px;top:381px;width:1px;height:125px;background:#939393"></div>
<div class="a" style="left:303px;top:381px;width:1px;height:125px;background:#939393"></div>
<div class="a" style="left:443px;top:381px;width:1px;height:125px;background:#939393"></div>
<div class="a" style="left:463px;top:381px;width:1px;height:125px;background:#939393"></div>
<div class="a" style="left:848px;top:381px;width:1px;height:125px;background:#939393"></div>
<div class="tb" style="left:303px;top:386px">Name</div>
<svg class="i" style="left:433px;top:387px" width="7" height="9"><path d="M1.3 1.4l3.5 3.1l-3.5 3.1" fill="none" stroke="#858585" stroke-width="1.9"/></svg>
<svg class="i" style="left:449px;top:387px" width="7" height="9"><path d="M1.3 1.4l3.5 3.1l-3.5 3.1" fill="none" stroke="#858585" stroke-width="1.9"/></svg>
<div class="tb" style="left:463px;top:386px">Value</div>
<svg class="i" style="left:291px;top:407px" width="7" height="9"><path d="M1.3 1.4l3.5 3.1l-3.5 3.1" fill="none" stroke="#858585" stroke-width="1.9"/></svg>
<div class="tb" style="left:303px;top:406px;letter-spacing:0.1px">Extension</div>
<div class="t" style="left:445px;top:405px;font-family:'Liberation Serif',serif;font-weight:bold;font-size:10px;color:#15295c;letter-spacing:-0.5px;-webkit-text-stroke:0.2px #15295c">abc</div>
<div class="tb" style="left:463px;top:405px;letter-spacing:0.050px">xml</div>
<svg class="i" style="left:291px;top:424px" width="7" height="9"><path d="M1.3 1.4l3.5 3.1l-3.5 3.1" fill="none" stroke="#858585" stroke-width="1.9"/></svg>
<div class="tb" style="left:303px;top:423px;letter-spacing:0.1px">Filename</div>
<div class="t" style="left:445px;top:422px;font-family:'Liberation Serif',serif;font-weight:bold;font-size:10px;color:#15295c;letter-spacing:-0.5px;-webkit-text-stroke:0.2px #15295c">abc</div>
<div class="tb" style="left:463px;top:422px;letter-spacing:-0.010px">ImportConfig5662778875734351770.xml</div>
<svg class="i" style="left:291px;top:441px" width="7" height="9"><path d="M1.3 1.4l3.5 3.1l-3.5 3.1" fill="none" stroke="#858585" stroke-width="1.9"/></svg>
<div class="tb" style="left:303px;top:440px;letter-spacing:0.1px">Format</div>
<div class="t" style="left:445px;top:439px;font-family:'Liberation Serif',serif;font-weight:bold;font-size:10px;color:#15295c;letter-spacing:-0.5px;-webkit-text-stroke:0.2px #15295c">abc</div>
<div class="tb" style="left:463px;top:439px;letter-spacing:-0.205px">XML (Extensible Markup Language document)</div>
<svg class="i" style="left:291px;top:458px" width="7" height="9"><path d="M1.3 1.4l3.5 3.1l-3.5 3.1" fill="none" stroke="#858585" stroke-width="1.9"/></svg>
<div class="tb" style="left:303px;top:457px;letter-spacing:0.1px">MIME Type</div>
<div class="t" style="left:445px;top:456px;font-family:'Liberation Serif',serif;font-weight:bold;font-size:10px;color:#15295c;letter-spacing:-0.5px;-webkit-text-stroke:0.2px #15295c">abc</div>
<div class="tb" style="left:463px;top:456px;letter-spacing:0.050px">application/xml</div>
<svg class="i" style="left:291px;top:475px" width="7" height="9"><path d="M1.3 1.4l3.5 3.1l-3.5 3.1" fill="none" stroke="#858585" stroke-width="1.9"/></svg>
<div class="tb" style="left:303px;top:474px;letter-spacing:0.1px">Size</div>
<div class="t" style="left:445px;top:473px;font-family:'Liberation Serif',serif;font-weight:bold;font-size:10px;color:#15295c;letter-spacing:-0.5px;-webkit-text-stroke:0.2px #15295c">abc</div>
<div class="tb" style="left:463px;top:473px;letter-spacing:0.050px">1,697</div>
<svg class="i" style="left:291px;top:492px" width="7" height="9"><path d="M1.3 1.4l3.5 3.1l-3.5 3.1" fill="none" stroke="#858585" stroke-width="1.9"/></svg>
<div class="tb" style="left:303px;top:491px;letter-spacing:0.1px">Upload Time</div>
<div class="t" style="left:445px;top:490px;font-family:'Liberation Serif',serif;font-weight:bold;font-size:10px;color:#15295c;letter-spacing:-0.5px;-webkit-text-stroke:0.2px #15295c">abc</div>
<div class="tb" style="left:463px;top:490px;letter-spacing:0.130px">2016-06-27 16:55:49</div>
<svg class="i" style="left:838px;top:388px" width="7" height="9"><path d="M1.3 1.4l3.5 3.1l-3.5 3.1" fill="none" stroke="#858585" stroke-width="1.9"/></svg>
<div class="a" style="left:834px;top:38px;width:8px;height:5px;background:#fff"></div>
<div class="a" style="left:835px;top:39px;width:4px;height:3px;background:#767676"></div>
<div class="a" style="left:590px;top:2px;width:258px;height:25px;border:3px solid #9f101b;background:#fff"></div>
<div class="a" style="left:596px;top:6px;width:112px;height:18px;border:1px solid #a9a9a9;background:#e3e3e3"></div>
<div class="t" style="left:600px;top:9px;font-size:10.5px">ID/Name</div>
<svg class="i" style="left:691px;top:15px" width="10" height="6"><path d="M1 0.5l4 4l4-4" fill="none" stroke="#444" stroke-width="1.1"/></svg>
<div class="a" style="left:707px;top:5px;width:124px;height:19px;border:1px solid #b5b5b5;background:#fff"></div>
<div class="tb" style="left:710px;top:8px">ExcelImport</div>
<div class="a" style="left:833px;top:5px;width:12px;height:19px;overflow:hidden"><svg width="16" height="19" style="position:absolute;left:0;top:0"><path d="M1 3.5l7 7l-7 7z" fill="#b9d2ea" stroke="#8aa2b8" stroke-width="0.8"/><path d="M8 3.5l7 7l-7 7z" fill="#a9c4dc" stroke="#222" stroke-width="1"/></svg></div>
<div class="a" style="left:707px;top:27px;width:124px;height:144px;border:1px solid #8a8f9a;border-top:none;background:#fff"></div>
<svg class="i" style="left:711px;top:27px" width="16" height="16"><path d="M0.5 0.5h10.5l4.5 4.5v10.5h-15z" fill="#fff" stroke="#8a8a8a" stroke-width="1"/><path d="M15.5 5v10.5h-15" fill="none" stroke="#000" stroke-width="1.3"/><path d="M10.5 0.5v4.5h4.5" fill="#fff" stroke="#9a9a9a" stroke-width="0.8"/><path d="M11 0.5l4.5 4.5" stroke="#222" stroke-width="0.9"/><path d="M4.3 4l-2.1 2.2l2.1 2.2M10.7 4l2.1 2.2l-2.1 2.2" fill="none" stroke="#1a2a9a" stroke-width="1.2"/><circle cx="7.5" cy="6.2" r="2.7" fill="#1f6fc4" stroke="#0c3c8a" stroke-width="0.6"/><circle cx="7.1" cy="5.7" r="1.3" fill="#4cc47c"/><rect x="3" y="10" width="9.5" height="1" fill="#2f57a8"/><rect x="3" y="12" width="9.5" height="1" fill="#2f57a8"/></svg>
<div class="a" style="left:728px;top:27px;width:102px;height:16px;overflow:hidden"><div class="tb" style="left:0;top:2px">ExcelImportProduct (2016</div></div>
<svg class="i" style="left:711px;top:45px" width="16" height="16"><path d="M0.5 0.5h10.5l4.5 4.5v10.5h-15z" fill="#fff" stroke="#8a8a8a" stroke-width="1"/><path d="M15.5 5v10.5h-15" fill="none" stroke="#000" stroke-width="1.3"/><path d="M10.5 0.5v4.5h4.5" fill="#fff" stroke="#9a9a9a" stroke-width="0.8"/><path d="M11 0.5l4.5 4.5" stroke="#222" stroke-width="0.9"/><path d="M4.3 4l-2.1 2.2l2.1 2.2M10.7 4l2.1 2.2l-2.1 2.2" fill="none" stroke="#1a2a9a" stroke-width="1.2"/><circle cx="7.5" cy="6.2" r="2.7" fill="#1f6fc4" stroke="#0c3c8a" stroke-width="0.6"/><circle cx="7.1" cy="5.7" r="1.3" fill="#4cc47c"/><rect x="3" y="10" width="9.5" height="1" fill="#2f57a8"/><rect x="3" y="12" width="9.5" height="1" fill="#2f57a8"/></svg>
<div class="tb" style="left:728px;top:47px;width:102px;overflow:hidden">ExcelImportEntity (2016</div>
<div class="a" style="left:706px;top:26px;width:128px;height:19px;border:3px solid #9f101b"></div>
</body></html>
